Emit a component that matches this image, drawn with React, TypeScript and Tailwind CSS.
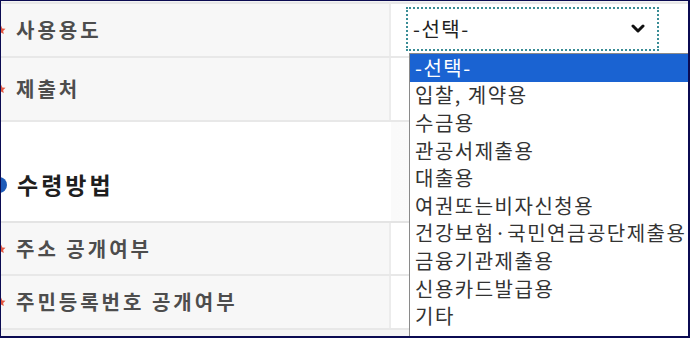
const font = { fontFamily: '"Noto Sans CJK KR", "Noto Sans", sans-serif' };

const options = [
  '-선택-',
  '입찰, 계약용',
  '수금용',
  '관공서제출용',
  '대출용',
  '여권또는비자신청용',
  '건강보험·국민연금공단제출용',
  '금융기관제출용',
  '신용카드발급용',
  '기타',
];

// red required-mark, partly cut off at the left edge like the screenshot
function Star() {
  return (
    <svg width="10" height="10" viewBox="0 0 10 10" className="-ml-[5px] mr-[10px] shrink-0">
      <path d="M5 0.5l1.3 3 3.2.3-2.4 2.1.7 3.1L5 7.4 2.2 9l.7-3.1L.5 3.8l3.2-.3z" fill="#e4553f" />
    </svg>
  );
}

function Row({ label, h, children }: { label: string; h: string; children?: React.ReactNode }) {
  return (
    <div className={`flex ${h} border-b-2 border-[#e8e8e8]`}>
      <div className="w-[390px] bg-[#f7f7f7] border-r-2 border-[#ececec] flex items-center">
        <Star />
        <span className="text-[20px] font-bold text-[#4d4d4d] tracking-[3px] whitespace-nowrap">{label}</span>
      </div>
      <div className="flex-1 bg-white">{children}</div>
    </div>
  );
}

export default function App() {
  return (
    <div
      style={font}
      className="relative w-[690px] h-[338px] overflow-hidden bg-[#f4f4f4] border-t border-l border-r-2 border-b-2 border-[#0b0b52]"
    >
      <div className="h-[3px] border-b-2 border-[#e8e8e8] bg-[#f3f3f3]" />
      <Row label="사용용도" h="h-[54px]">
        <div className="ml-[15px] mt-[3px] w-[253px] h-[44px] border-2 border-dotted border-[#3a8d96] bg-white flex items-center justify-between pl-[5px] pr-[12px]">
          <span className="text-[20px] tracking-[1.5px] text-[#222]">-선택-</span>
          <svg width="14" height="10" viewBox="0 0 14 10">
            <path d="M2 2l5 5 5-5" fill="none" stroke="#111" strokeWidth="3" strokeLinecap="round" strokeLinejoin="round" />
          </svg>
        </div>
      </Row>
      <Row label="제출처" h="h-[64px]" />
      <div className="flex h-[101px] border-b-2 border-[#e4e4e4] bg-white">
        <div className="w-[390px] flex items-center pt-[26px]">
          <span className="w-[16px] h-[16px] rounded-full bg-[#1e5bb8] -ml-[10px] mr-[10px]" />
          <span className="text-[23px] font-bold text-[#1f1f1f] tracking-[3px]">수령방법</span>
        </div>
        <div className="flex-1 bg-gradient-to-r from-[#fafafa] to-white" />
      </div>
      <Row label="주소 공개여부" h="h-[53px]" />
      <Row label="주민등록번호 공개여부" h="h-[54px]" />

      <div className="absolute left-[408px] top-[52px] w-[290px] h-[300px] bg-white border-l border-t border-[#8a8a8a]">
        {options.map((o, i) => (
          <div
            key={o}
            className={`h-[27.6px] flex items-center pl-[5px] text-[20px] tracking-[1.5px] leading-none whitespace-nowrap ${
              i === 0 ? 'bg-[#1a63d2] text-white' : 'text-[#333]'
            }`}
          >
            {o}
          </div>
        ))}
      </div>
    </div>
  );
}
